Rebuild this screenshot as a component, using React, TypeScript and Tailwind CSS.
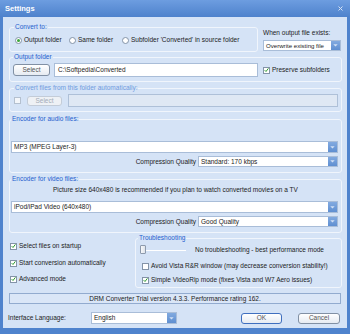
import React from "react";

const BLUE_LABEL = "text-[#1f5fcf]";

function CheckMark() {
  return (
    <svg width="6" height="6" viewBox="0 0 6 6">
      <path d="M0.8 3.2 L2.4 4.8 L5.3 1" stroke="#2e9a2e" strokeWidth="1.2" fill="none" />
    </svg>
  );
}

function Check({ checked, label, disabled, className = "" }: { checked?: boolean; label?: string; disabled?: boolean; className?: string }) {
  return (
    <div className={`flex items-center ${className}`}>
      <span
        className={`w-[7px] h-[7px] shrink-0 border flex items-center justify-center ${
          disabled ? "border-[#b4c0cf] bg-[#f3f6fa]" : "border-[#8393a8] bg-white"
        }`}
      >
        {checked && <CheckMark />}
      </span>
      {label && <span className="ml-[2px] whitespace-nowrap leading-[8px]">{label}</span>}
    </div>
  );
}

function Radio({ checked, label, className = "" }: { checked?: boolean; label: string; className?: string }) {
  return (
    <div className={`flex items-center ${className}`}>
      <span className="w-[7px] h-[7px] shrink-0 rounded-full border border-[#8393a8] bg-white flex items-center justify-center">
        {checked && <span className="w-[3px] h-[3px] rounded-full bg-[#3aa53a]" />}
      </span>
      <span className="ml-[2px] whitespace-nowrap leading-[8px]">{label}</span>
    </div>
  );
}

function Drop({ text, className = "", textClass = "" }: { text: string; className?: string; textClass?: string }) {
  return (
    <div className={`flex bg-white border border-[#a9bdd8] ${className}`}>
      <span className={`flex-1 pl-[2px] flex items-center whitespace-nowrap overflow-hidden ${textClass}`}>{text}</span>
      <span className="w-[9px] shrink-0 bg-gradient-to-b from-[#82aae0] to-[#5f8fd1] flex items-center justify-center">
        <svg width="5" height="3" viewBox="0 0 5 3">
          <path d="M0.3 0.3 L2.5 2.6 L4.7 0.3 Z" fill="#d3e1f5" />
        </svg>
      </span>
    </div>
  );
}

function Btn({ label, className = "", disabled, def }: { label: string; className?: string; disabled?: boolean; def?: boolean }) {
  return (
    <div
      className={`flex items-center justify-center rounded-[3px] border ${
        disabled
          ? "border-[#c3ccd8] bg-[#eef1f5] text-[#a3abb6]"
          : def
          ? "border-[#3f6fbf] bg-gradient-to-b from-white to-[#e6ebf2] text-[#555]"
          : "border-[#8190a4] bg-gradient-to-b from-white to-[#e6ebf2] text-[#555]"
      } ${className}`}
    >
      {label}
    </div>
  );
}

function Group({ title, className = "", children, disabled }: { title: string; className?: string; children?: React.ReactNode; disabled?: boolean }) {
  return (
    <fieldset className={`border border-[#f0f5fc] rounded-[3px] ${className}`}>
      <legend className={`leading-[8px] px-[1px] ${disabled ? "text-[#6f9be0]" : BLUE_LABEL}`}>{title}</legend>
      {children}
    </fieldset>
  );
}

export default function App() {
  return (
    <div className="w-[350px] h-[334px] bg-[#4f83cd] flex flex-col text-[6.5px] text-[#1b1b1b] font-['Liberation_Sans',Arial,sans-serif] overflow-hidden">
      {/* title bar */}
      <div className="h-[17px] shrink-0 flex items-center justify-between pl-[5px] pr-[7px] bg-gradient-to-b from-[#6d9de0] to-[#4e82cc]">
        <span className="text-white font-bold text-[7.5px] leading-[10px]">Settings</span>
        <svg width="5" height="5" viewBox="0 0 5 5">
          <path d="M0.5 0.5 L4.5 4.5 M4.5 0.5 L0.5 4.5" stroke="#d4e1f3" strokeWidth="1" />
        </svg>
      </div>

      {/* body */}
      <div className="mx-[3px] mb-[6px] flex-1 bg-[#d5e3f6] pl-[6px] pr-[5px] flex flex-col">
        {/* Row 1 */}
        <div className="mt-[6px] flex h-[29px] shrink-0">
          <Group title="Convert to:" className="w-[249px] h-[29px] px-[4px]">
            <div className="mt-[4px] h-[10px] flex items-center">
              <Radio checked label="Output folder" className="ml-[1px] w-[54px]" />
              <Radio label="Same folder" className="w-[53px]" />
              <Radio label="Subfolder 'Converted' in source folder" />
            </div>
          </Group>
          <div className="ml-[5px] flex-1 flex flex-col">
            <div className="mt-[6px] leading-[8px] whitespace-nowrap">When output file exists:</div>
            <Drop text="Overwrite existing file" textClass="pl-[1px] text-[6.1px]" className="mt-[3px] h-[11px] mr-[1px]" />
          </div>
        </div>

        {/* Row 2 */}
        <Group title="Output folder" className="mt-[1px] h-[29px] shrink-0 px-[3px]">
          <div className="mt-[2px] h-[14px] flex items-center">
            <Btn label="Select" className="w-[37px] h-[12px]" />
            <div className="ml-[4px] w-[204px] h-[14px] bg-white border border-[#a9bdd8] flex items-center pl-[3px]">
              C:\Softpedia\Converted
            </div>
            <Check checked label="Preserve subfolders" className="ml-[5px]" />
          </div>
        </Group>

        {/* Row 3 */}
        <Group title="Convert files from this folder automatically:" disabled className="mt-[2px] h-[28px] shrink-0 pl-[4px] pr-[3px]">
          <div className="mt-[2px] h-[13px] flex items-center">
            <Check disabled />
            <Btn label="Select" disabled className="ml-[6px] w-[35px] h-[10px]" />
            <div className="ml-[6px] flex-1 h-[13px] bg-[#dfe8f4] border border-[#aec0d8]" />
          </div>
        </Group>

        {/* Row 4 */}
        <Group title="Encoder for audio files:" className="mt-[3px] h-[58px] shrink-0 pl-[1px] pr-[3px]">
          <Drop text="MP3 (MPEG Layer-3)" className="mt-[18px] h-[12px]" />
          <div className="mt-[3px] h-[11px] flex items-center justify-end">
            <span className="mr-[2px] whitespace-nowrap">Compression Quality</span>
            <Drop text="Standard: 170 kbps" className="w-[140px] h-[11px]" />
          </div>
        </Group>

        {/* Row 5 */}
        <Group title="Encoder for video files:" className="mt-[2px] h-[58px] shrink-0 pl-[1px] pr-[3px]">
          <div className="mt-[3px] h-[8px] leading-[8px] ml-[42px] whitespace-nowrap">
            Picture size 640x480 is recommended if you plan to watch converted movies on a TV
          </div>
          <Drop text="iPod/iPad Video (640x480)" className="mt-[7px] h-[12px]" />
          <div className="mt-[3px] h-[11px] flex items-center justify-end">
            <span className="mr-[2px] whitespace-nowrap">Compression Quality</span>
            <Drop text="Good Quality" className="w-[140px] h-[11px]" />
          </div>
        </Group>

        {/* Row 6 */}
        <div className="mt-[1px] h-[54px] shrink-0 flex">
          <div className="w-[126px] flex flex-col pl-[1px] pt-[8px]">
            <Check checked label="Select files on startup" className="h-[8px]" />
            <Check checked label="Start conversion automatically" className="h-[8px] mt-[9px]" />
            <Check checked label="Advanced mode" className="h-[8px] mt-[8px]" />
          </div>
          <Group title="Troubleshooting" className="flex-1 h-[54px] px-[2px]">
            <div className="mt-[3px] h-[9px] flex items-center">
              <div className="relative ml-[2px] w-[46px] h-[9px]">
                <div className="absolute left-0 right-0 top-[5px] h-[1px] bg-[#9fb2cc] border-b border-white" />
                <div className="absolute left-0 top-0 w-[6px] h-[9px] rounded-[1px] border border-[#8d9aac] bg-gradient-to-r from-[#f7f8fa] to-[#dfe4ea]" />
              </div>
              <span className="ml-[9px] whitespace-nowrap">No troubleshooting - best performance mode</span>
            </div>
            <Check label="Avoid Vista R&R window (may decrease conversion stability!)" className="mt-[8px] ml-[4px] h-[8px]" />
            <Check checked label="Simple VideoRip mode (fixes Vista and W7 Aero issues)" className="mt-[6px] ml-[4px] h-[8px]" />
          </Group>
        </div>

        {/* Status bar */}
        <div className="mt-[5px] mr-[1px] h-[11px] shrink-0 bg-[#dae6f7] border border-[#92abcf] flex items-center justify-center">
          DRM Converter Trial version 4.3.3. Performance rating 162.
        </div>

        {/* Bottom row */}
        <div className="mt-[8px] h-[12px] shrink-0 flex items-center -ml-[1px]">
          <span className="w-[83px] whitespace-nowrap">Interface Language:</span>
          <Drop text="English" className="w-[86px] h-[12px]" />
          <Btn label="OK" def className="ml-[64px] w-[41px] h-[11px]" />
          <Btn label="Cancel" className="ml-[16px] w-[42px] h-[11px]" />
        </div>
      </div>
    </div>
  );
}
